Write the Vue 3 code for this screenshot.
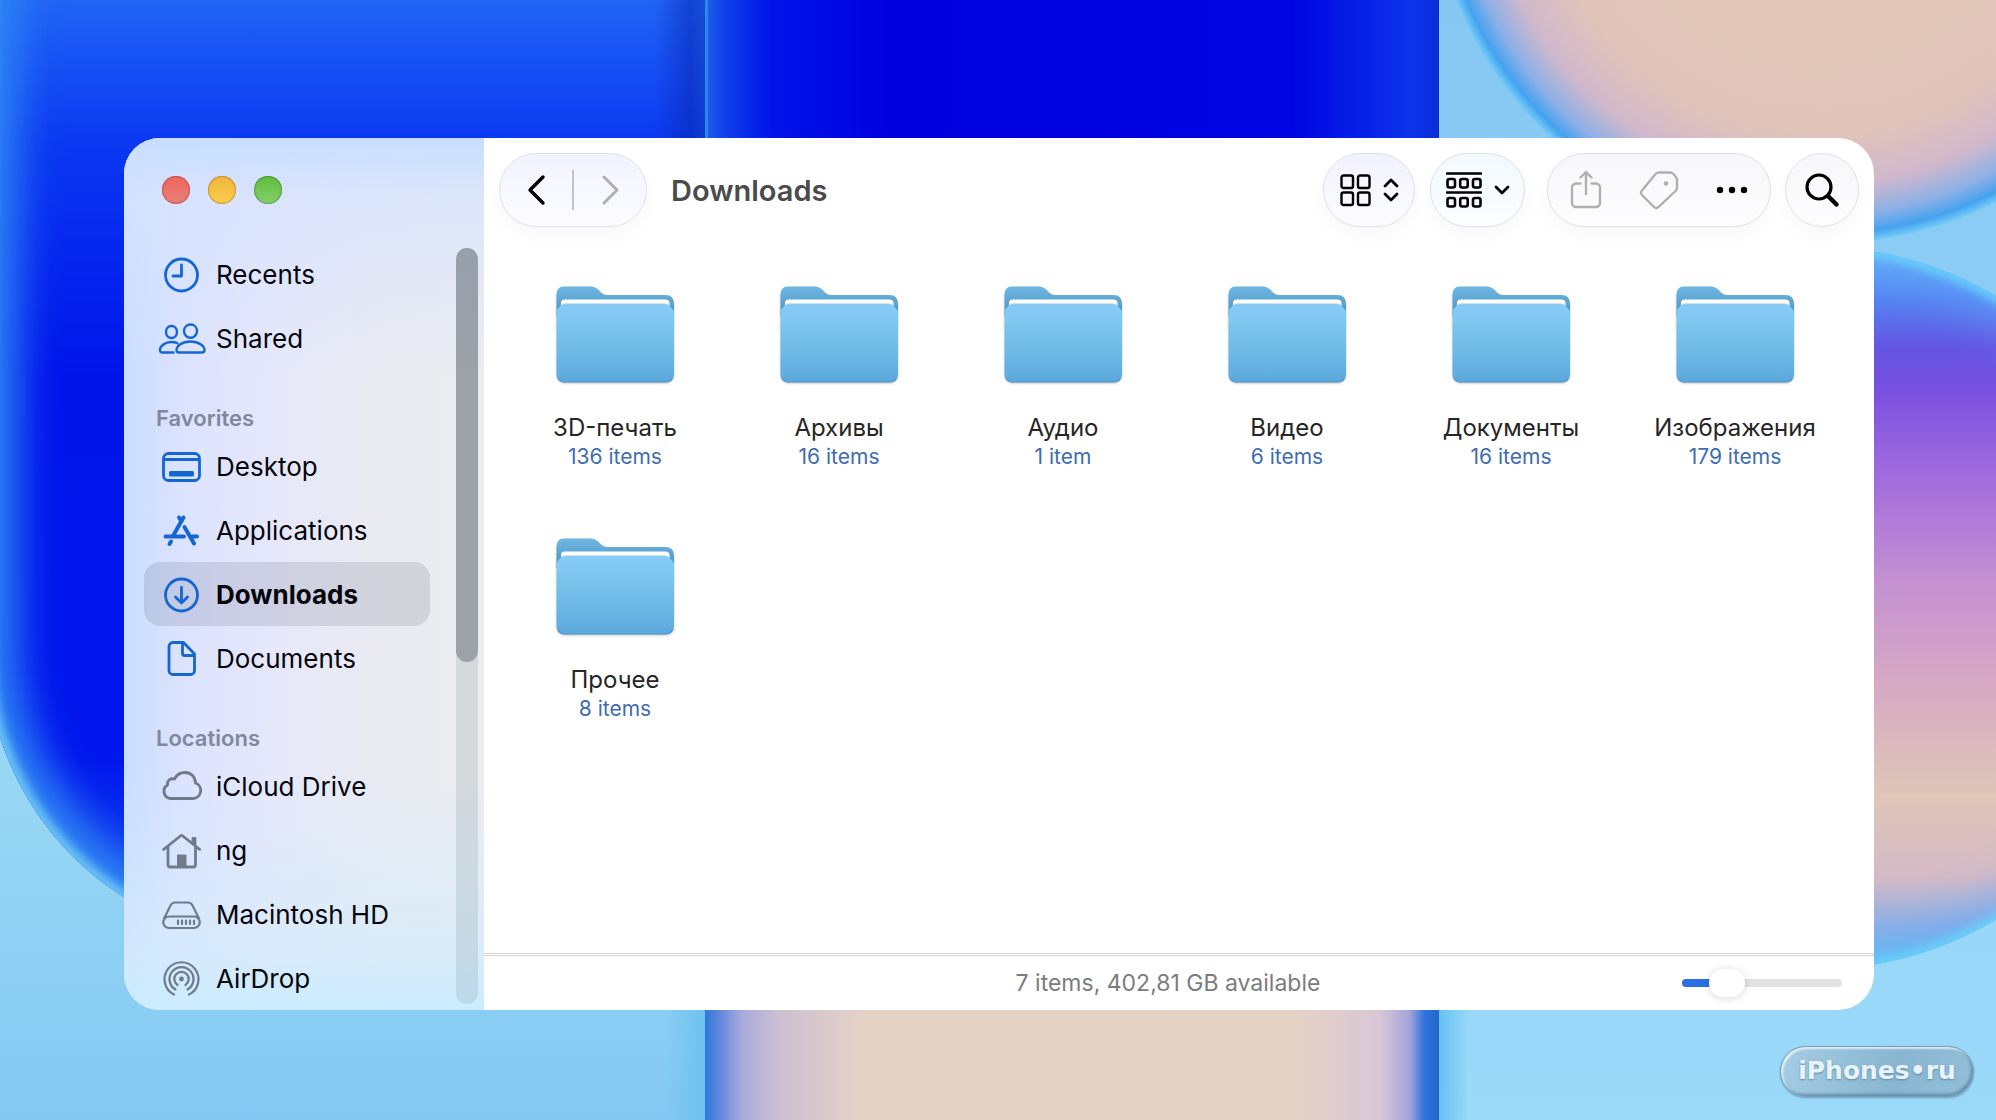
<template>
  <div class="desktop">
    <svg class="wallpaper" viewBox="0 0 1996 1120" preserveAspectRatio="none" aria-hidden="true">
      <defs>
        <linearGradient id="sky" x1="0" y1="0" x2="0" y2="1">
          <stop offset="0" stop-color="#7cc4f2" />
          <stop offset="0.7" stop-color="#98d7f4" />
          <stop offset="1" stop-color="#84c9f3" />
        </linearGradient>
        <linearGradient id="skyRight" x1="0" y1="0" x2="0" y2="1">
          <stop offset="0" stop-color="#86c8f3" />
          <stop offset="1" stop-color="#9bdaf9" />
        </linearGradient>
        <linearGradient id="blob" gradientUnits="userSpaceOnUse" x1="0" y1="0" x2="0" y2="943">
          <stop offset="0" stop-color="#2064f5" />
          <stop offset="0.15" stop-color="#0b38f1" />
          <stop offset="0.4" stop-color="#0014ea" />
          <stop offset="0.8" stop-color="#0016ec" />
          <stop offset="1" stop-color="#1a50ee" />
        </linearGradient>
        <linearGradient id="midTop">
          <stop offset="0" stop-color="#1b62ea" />
          <stop offset="0.03" stop-color="#0f3cea" />
          <stop offset="0.09" stop-color="#0014ea" />
          <stop offset="0.25" stop-color="#0000de" />
          <stop offset="0.8" stop-color="#0004e2" />
          <stop offset="0.96" stop-color="#0c34ea" />
          <stop offset="1" stop-color="#0c2cd8" />
        </linearGradient>
        <linearGradient id="midBottom">
          <stop offset="0" stop-color="#2d78d8" />
          <stop offset="0.02" stop-color="#6286de" />
          <stop offset="0.05" stop-color="#a9aadc" />
          <stop offset="0.1" stop-color="#cdbfd2" />
          <stop offset="0.22" stop-color="#e5d3c7" />
          <stop offset="0.8" stop-color="#e5d3c6" />
          <stop offset="0.92" stop-color="#d8c6d6" />
          <stop offset="0.96" stop-color="#a4a4dc" />
          <stop offset="0.98" stop-color="#2f72dc" />
          <stop offset="1" stop-color="#2268cc" />
        </linearGradient>
        <radialGradient id="peach">
          <stop offset="0" stop-color="#e2c8b6" />
          <stop offset="0.72" stop-color="#e0c4ba" />
          <stop offset="0.85" stop-color="#d0b8cc" />
          <stop offset="0.93" stop-color="#8cb0e6" />
          <stop offset="0.975" stop-color="#45a2f0" />
          <stop offset="1" stop-color="#74cdf8" />
        </radialGradient>
        <linearGradient id="violet" x1="0" y1="0" x2="0" y2="1">
          <stop offset="0" stop-color="#62b4fa" />
          <stop offset="0.07" stop-color="#5484f2" />
          <stop offset="0.14" stop-color="#6456e2" />
          <stop offset="0.2" stop-color="#7a50e0" />
          <stop offset="0.33" stop-color="#a46edc" />
          <stop offset="0.46" stop-color="#c490d2" />
          <stop offset="0.6" stop-color="#d6a8c4" />
          <stop offset="0.76" stop-color="#dec6b8" />
          <stop offset="0.87" stop-color="#d4bac6" />
          <stop offset="0.94" stop-color="#8eb0e4" />
          <stop offset="1" stop-color="#58c4f4" />
        </linearGradient>
        <linearGradient id="seam">
          <stop offset="0" stop-color="#0a28b4" stop-opacity="0" />
          <stop offset="0.7" stop-color="#0a28b4" stop-opacity="0.55" />
          <stop offset="1" stop-color="#1040c0" stop-opacity="0.6" />
        </linearGradient>
        <linearGradient id="seamLow">
          <stop offset="0" stop-color="#6cc2ee" stop-opacity="0" />
          <stop offset="1" stop-color="#6cc2ee" />
        </linearGradient>
        <linearGradient id="seamRight">
          <stop offset="0" stop-color="#64c0f2" />
          <stop offset="1" stop-color="#64c0f2" stop-opacity="0" />
        </linearGradient>
        <filter id="soft" x="-10%" y="-10%" width="120%" height="120%">
          <feGaussianBlur stdDeviation="20" />
        </filter>
        <filter id="rim" x="-10%" y="-10%" width="120%" height="120%">
          <feGaussianBlur stdDeviation="5" />
        </filter>
        <clipPath id="bandLeft"><rect width="705" height="1120" /></clipPath>
        <clipPath id="bandRight"><rect x="1439" width="557" height="1120" /></clipPath>
        <clipPath id="blobClip"><rect x="-14" y="-320" width="1100" height="1263" rx="296" /></clipPath>
        <clipPath id="orbClip"><circle cx="1812" cy="608" r="362" /></clipPath>
      </defs>
      <g clip-path="url(#bandLeft)">
        <rect width="705" height="1120" fill="url(#sky)" />
        <rect x="665" y="900" width="40" height="220" fill="url(#seamLow)" />
        <g clip-path="url(#blobClip)">
          <rect width="705" height="943" fill="url(#blob)" />
          <rect x="-14" y="-320" width="1100" height="1263" rx="296" fill="none" stroke="#2f86f4" stroke-width="64" filter="url(#soft)" />
          <rect x="-14" y="-320" width="1100" height="1263" rx="296" fill="none" stroke="#6cc4f4" stroke-width="14" filter="url(#rim)" />
        </g>
        <rect x="655" width="50" height="140" fill="url(#seam)" />
      </g>
      <rect x="705" width="734" height="560" fill="url(#midTop)" />
      <rect x="705" y="560" width="734" height="560" fill="url(#midBottom)" />
      <rect x="705" width="3" height="140" fill="#2f86e8" />
      <g clip-path="url(#bandRight)">
        <rect x="1439" width="557" height="1120" fill="url(#skyRight)" />
        <rect x="1439" y="900" width="30" height="220" fill="url(#seamRight)" />
        <circle cx="1820" cy="-150" r="394" fill="url(#peach)" />
        <circle cx="1812" cy="608" r="362" fill="url(#violet)" />
        <g clip-path="url(#orbClip)">
          <circle cx="1812" cy="608" r="362" fill="none" stroke="#5fa8f8" stroke-width="40" stroke-opacity="0.6" filter="url(#soft)" />
          <circle cx="1812" cy="608" r="362" fill="none" stroke="#68d0fa" stroke-width="12" filter="url(#rim)" />
        </g>
      </g>
    </svg>

    <main class="window">
      <aside class="sidebar">
        <div class="traffic">
          <button class="light red" type="button" aria-label="Close"></button>
          <button class="light yellow" type="button" aria-label="Minimize"></button>
          <button class="light green" type="button" aria-label="Zoom"></button>
        </div>
        <div class="sidebar_body">
          <nav class="places">
            <template v-for="section in sections" :key="section.id">
              <h2 v-if="section.title" class="section_title">{{ section.title }}</h2>
              <a
                v-for="item in section.items"
                :key="item.name"
                href="#"
                class="place"
                :class="{ active: item.name === current, muted: section.muted }"
                @click.prevent="current = item.name"
              >
                <svg class="place_icon" viewBox="0 0 48 48" aria-hidden="true">
                  <path class="line" :d="item.line" :stroke-width="item.weight || 2.8" />
                  <path v-if="item.solid" class="solid" :d="item.solid" />
                </svg>
                <span>{{ item.name }}</span>
              </a>
            </template>
          </nav>
          <div class="scroll_track"><div class="scroll_thumb"></div></div>
        </div>
      </aside>

      <section class="content">
        <header class="toolbar">
          <div class="pill nav_pill">
            <button type="button" aria-label="Back">
              <svg width="20" height="32" viewBox="0 0 20 32"><path d="M17 3 4 16l13 13" stroke-width="3.4" /></svg>
            </button>
            <span class="divider"></span>
            <button type="button" aria-label="Forward" class="dim">
              <svg width="20" height="32" viewBox="0 0 20 32"><path d="m4 3 13 13L4 29" stroke-width="3" /></svg>
            </button>
          </div>
          <h1 class="title">Downloads</h1>

          <button class="pill view_pill" type="button" aria-label="View">
            <svg width="32" height="34" viewBox="0 0 32 34">
              <g stroke-width="2.4">
                <rect x="2.5" y="2.500" width="11.500" height="12.500" rx="2" />
                <rect x="19" y="2.500" width="11.500" height="12.500" rx="2" />
                <rect x="2.500" y="19.500" width="11.500" height="12.500" rx="2" />
                <rect x="19" y="19.500" width="11.500" height="12.500" rx="2" />
              </g>
            </svg>
            <svg width="16" height="24" viewBox="0 0 16 24"><path d="m2 8 6-6 6 6M2 16l6 6 6-6" stroke-width="2.8" /></svg>
          </button>

          <button class="pill group_pill" type="button" aria-label="Group">
            <svg width="36" height="38" viewBox="0 0 36 38">
              <path d="M1 2.500h34M1 21.500h34" stroke-width="2.600" />
              <g stroke-width="2.600">
                <rect x="1.500" y="8" width="7.500" height="8.500" rx="2" />
                <rect x="14.200" y="8" width="7.500" height="8.500" rx="2" />
                <rect x="27" y="8" width="7.500" height="8.500" rx="2" />
                <rect x="1.500" y="27" width="7.500" height="8.500" rx="2" />
                <rect x="14.200" y="27" width="7.500" height="8.500" rx="2" />
                <rect x="27" y="27" width="7.500" height="8.500" rx="2" />
              </g>
            </svg>
            <svg width="16" height="12" viewBox="0 0 16 12"><path d="m2 3 6 6 6-6" stroke-width="2.8" /></svg>
          </button>

          <div class="pill action_pill">
            <button type="button" aria-label="Share" class="dim">
              <svg width="32" height="40" viewBox="0 0 32 40">
                <path d="M10.500 13.500H6a4 4 0 0 0-4 4V33a4 4 0 0 0 4 4h20a4 4 0 0 0 4-4V17.500a4 4 0 0 0-4-4h-4.500M16 24V2M10.500 7.500 16 2l5.500 5.500" stroke-width="2.400" />
              </svg>
            </button>
            <button type="button" aria-label="Tags" class="dim">
              <svg width="40" height="40" viewBox="0 0 40 40">
                <path d="M20 2.500h11q2 0 3.500 1.500l2 2.500q1.500 1.500 1.500 3.500v7.500q0 2-1.500 3.500L19.500 37q-2.500 2-4.500 0L3 25q-2-2.500 0-4.500L16.500 4Q18 2.500 20 2.500z" stroke-width="2.400" />
                <circle cx="27" cy="13.500" r="2.300" fill="currentColor" stroke="none" />
              </svg>
            </button>
            <button type="button" aria-label="More">
              <svg width="32" height="10" viewBox="0 0 32 10">
                <g fill="currentColor" stroke="none">
                  <circle cx="4" cy="5" r="3.200" /><circle cx="16" cy="5" r="3.200" /><circle cx="28" cy="5" r="3.200" />
                </g>
              </svg>
            </button>
          </div>

          <button class="pill search_pill" type="button" aria-label="Search">
            <svg width="36" height="36" viewBox="0 0 36 36">
              <circle cx="15" cy="15" r="12" stroke-width="3.200" />
              <path d="m24 24 8.500 8.500" stroke-width="4.400" />
            </svg>
          </button>
        </header>

        <div class="files">
          <a v-for="folder in folders" :key="folder.name" href="#" class="folder" @click.prevent>
            <svg class="folder_icon" width="119" height="97" viewBox="0 0 119 97" aria-hidden="true">
              <defs>
                <linearGradient id="back" x1="0" y1="0" x2="0" y2="1">
                  <stop offset="0" stop-color="#6fb8e2" />
                  <stop offset="1" stop-color="#4b92c0" />
                </linearGradient>
                <linearGradient id="front" x1="0" y1="0" x2="0" y2="1">
                  <stop offset="0" stop-color="#87ccf7" />
                  <stop offset="0.5" stop-color="#73bee8" />
                  <stop offset="1" stop-color="#5ba9dc" />
                </linearGradient>
              </defs>
              <path d="M.5 9Q.5.500 8 .500h27q4 0 6.500 2.500l4 4Q48 9 51 9h58q9 0 9 9v12H.5z" fill="url(#back)" />
              <path d="M5 24v-7q0-3.500 3.500-3.500h101q4 0 4 3.500v7z" fill="#fff" />
              <path d="M.5 26q0-2.500 2-4l3-3q1.500-1.500 4-1.500h99q2.500 0 4 1.500l3.500 3.500q2 2 2 4V88q0 8-8 8H8.500q-8 0-8-8z" fill="url(#front)" />
              <path d="M2.500 92.500q2 3.500 6 3.500H110q4 0 6-3.500" fill="none" stroke="#4d93c2" stroke-width="1.200" />
            </svg>
            <span class="folder_name">{{ folder.name }}</span>
            <span class="folder_count">{{ folder.count }} {{ folder.count === 1 ? 'item' : 'items' }}</span>
          </a>
        </div>

        <footer class="status">
          <span class="status_text">{{ folders.length }} items, 402,81 GB available</span>
          <input
            v-model="iconSize"
            class="size_slider"
            type="range"
            min="0"
            max="100"
            aria-label="Icon size"
            :style="{ '--fill': iconSize + '%' }"
          />
        </footer>
      </section>
    </main>

    <a href="#" class="badge" @click.prevent>iPhones•ru</a>
  </div>
</template>

<script setup>
import { ref } from 'vue';

const current = ref('Downloads');
const iconSize = ref(22);

// Иконки бокового меню: line — контур, solid — заливка
const sections = [
  {
    id: 'top',
    items: [
      { name: 'Recents', line: 'M39.500 25a16 16 0 1 1-32 0 16 16 0 0 1 32 0zM23.500 15v11h-8.500' },
      {
        name: 'Shared',
        weight: 2.4,
        line: 'M19 18c0 3.500-2.500 6-5.500 6S8 21.500 8 18s2.500-6 5.500-6 5.500 2.500 5.500 6zM39 17c0 4-3 6.800-6.500 6.800S26 21 26 17s3-6.500 6.500-6.500S39 13 39 17zM15.500 38.500H4.500c-1.600 0-2.500-1-2.500-2.500C2 32 7 28 13.500 28c2.500 0 4.500.500 6 1.300M21 38.500h23c1.600 0 2.500-1 2.500-2.500 0-4-5.500-8.500-14-8.500s-14 4.500-14 8.500c0 1.500.9 2.500 2.500 2.500z'
      }
    ]
  },
  {
    id: 'favorites',
    title: 'Favorites',
    items: [
      {
        name: 'Desktop',
        line: 'M10.500 11.500h26a5 5 0 0 1 5 5v17a5 5 0 0 1-5 5h-26a5 5 0 0 1-5-5v-17a5 5 0 0 1 5-5zM6 17.500h35',
        solid: 'M12.500 29h22a1.500 1.500 0 0 1 1.500 1.500V33a1.500 1.500 0 0 1-1.500 1.500h-22A1.500 1.500 0 0 1 11 33v-2.500a1.500 1.500 0 0 1 1.500-1.500z'
      },
      { name: 'Applications', weight: 4, line: 'M25.500 11.500 15.500 29M21 11.500l2.500 4M26.500 21l9.500 16.500M7.500 30.500h18.500M34 30.500h5M13 35.500l-1.500 2.500' },
      { name: 'Downloads', line: 'M39.500 25a16 16 0 1 1-32 0 16 16 0 0 1 32 0zM23.500 17.500v14.500M17.500 27l6 6 6-6' },
      { name: 'Documents', line: 'M15 8.500h10.500L36.500 20v16.500a4 4 0 0 1-4 4H15a4 4 0 0 1-4-4V12.500a4 4 0 0 1 4-4zM24.500 9v10.500a2 2 0 0 0 2 2H36.500' }
    ]
  },
  {
    id: 'locations',
    title: 'Locations',
    muted: true,
    items: [
      { name: 'iCloud Drive', line: 'M12.500 36.500h22.500a8 8 0 0 0 2.500-15.500C37.500 15 33 10.500 27 10.500c-5 0-8.500 2.500-10.500 6.500-4-1-7.500 1.500-7 6A7.300 7.300 0 0 0 12.500 36.500z' },
      {
        name: 'ng',
        line: 'M5.500 23.500 22.400 10q1.200-.9 2.400 0l17 13.500M10 21v17.500a2.500 2.500 0 0 0 2.500 2.500h22.500a2.500 2.500 0 0 0 2.500-2.500V21M35 17v-4.500h2V19',
        solid: 'M19 29.500a1 1 0 0 1 1-1h7.500a1 1 0 0 1 1 1V41H19z'
      },
      { name: 'Macintosh HD', line: 'M6 28.500 12.500 15.500q1.500-3 4.500-3h13q3 0 4.500 3L41 28.500M11 26.500h25a5.500 5.500 0 0 1 0 11.500H11a5.500 5.500 0 0 1 0-11.500zM20 30.500v3.500M24 30.500v3.500M28 30.500v3.500M32 30.500v3.500M36 30.500v3.500', weight: 2.2 },
      {
        name: 'AirDrop',
        weight: 2.2,
        line: 'M16 40.500a17 17 0 1 1 15 0M17.500 35.500a12 12 0 1 1 12 0M19.500 31a7.200 7.200 0 1 1 8 0',
        solid: 'M25.900 25a2.400 2.400 0 1 1-4.800 0 2.400 2.400 0 0 1 4.800 0z'
      }
    ]
  }
];

const folders = [
  { name: '3D-печать', count: 136 },
  { name: 'Архивы', count: 16 },
  { name: 'Аудио', count: 1 },
  { name: 'Видео', count: 6 },
  { name: 'Документы', count: 16 },
  { name: 'Изображения', count: 179 },
  { name: 'Прочее', count: 8 }
];
</script>

<style>
body {
  margin: 0;
}
</style>

<style scoped>
.desktop {
  position: relative;
  box-sizing: border-box;
  height: 100vh;
  min-height: 600px;
  padding: 138px 122px 110px 124px;
  overflow: hidden;
  font-family: Inter, "Liberation Sans", sans-serif;
}

.wallpaper {
  position: absolute;
  inset: 0;
  width: 100%;
  height: 100%;
}

.window {
  position: relative;
  display: flex;
  height: 100%;
  border-radius: 36px;
  overflow: hidden;
  background: #fff;
}

button {
  padding: 0;
  border: none;
  background: none;
  color: #000;
  font: inherit;
}

/* Боковая панель */
.sidebar {
  display: flex;
  flex-direction: column;
  flex: 0 0 360px;
  background:
    linear-gradient(180deg, #c8deff 0, rgba(214, 227, 255, 0.7) 60px, rgba(228, 232, 253, 0) 240px),
    linear-gradient(0deg, #cbecff 0, rgba(212, 236, 252, 0.7) 60px, rgba(228, 236, 248, 0) 240px),
    linear-gradient(90deg, #c9ddff 0, #dce3ff 60px, #e6e8fa 150px, #eaebf1 260px, #ebecef 100%);
}

.traffic {
  display: flex;
  flex: 0 0 66px;
  gap: 18px;
  padding: 38px 0 0 38px;
}

.light {
  width: 28px;
  height: 28px;
  border-radius: 50%;
}

.red {
  background: linear-gradient(#f0655c, #e8807a);
  box-shadow: inset 0 0 2px #7c1c18;
}

.yellow {
  background: linear-gradient(#f3b63c, #f8cc50);
  box-shadow: inset 0 0 2px #7a4a06;
}

.green {
  background: linear-gradient(#5fbf3c, #85cf6c);
  box-shadow: inset 0 0 2px #14500c;
}

.sidebar_body {
  display: flex;
  flex: 1;
  min-height: 0;
}

.places {
  flex: 1;
  padding: 0 26px 0 20px;
  overflow: hidden;
}

.section_title {
  margin: 0;
  padding: 32px 0 0 12px;
  font-size: 22px;
  font-weight: 600;
  line-height: 32px;
  color: #80889b;
}

.place {
  display: flex;
  align-items: center;
  gap: 10px;
  height: 64px;
  padding-left: 14px;
  border-radius: 16px;
  font-size: 26px;
  color: #05060c;
  text-decoration: none;
  white-space: nowrap;
}

.place.active {
  background: rgba(0, 0, 20, 0.1);
  font-weight: 700;
}

.place_icon {
  flex: none;
  width: 48px;
  height: 48px;
  color: #1466d2;
}

.muted .place_icon {
  color: #717a89;
}

.line {
  fill: none;
  stroke: currentColor;
  stroke-linecap: round;
  stroke-linejoin: round;
}

.solid {
  fill: currentColor;
}

.scroll_track {
  flex: 0 0 22px;
  margin: 6px;
  margin-left: 0;
  border-radius: 11px;
  background: rgba(40, 60, 70, 0.11);
}

.scroll_thumb {
  height: 54.7%;
  border-radius: 11px;
  background: rgba(60, 68, 76, 0.37);
}

/* Панель инструментов */
.content {
  display: flex;
  flex: 1;
  flex-direction: column;
  min-width: 0;
}

.toolbar {
  display: flex;
  align-items: center;
  flex: none;
  padding: 15px 15px 0;
}

.toolbar svg {
  display: block;
  fill: none;
  stroke: currentColor;
  stroke-linecap: round;
  stroke-linejoin: round;
}

.pill {
  display: flex;
  align-items: center;
  justify-content: center;
  box-sizing: border-box;
  height: 74px;
  border: 1px solid #dfe0e8;
  border-radius: 37px;
  background: linear-gradient(#f7f7fb, #fdfdfe);
  box-shadow: 0 8px 16px rgba(0, 0, 0, 0.03);
}

.nav_pill {
  gap: 26px;
  width: 148px;
  background: linear-gradient(#f1f3ff, #fcfcff);
}

.divider {
  width: 2px;
  height: 40px;
  background: #c2c3c9;
}

.pill .dim {
  color: #b0b0b3;
}

.title {
  flex: 1;
  margin: 0 0 0 24px;
  font-size: 29px;
  font-weight: 600;
  color: #4b4b4d;
}

.view_pill {
  gap: 12px;
  width: 92px;
  margin-right: 15px;
  background: linear-gradient(#f1f2ff, #fcfcff);
}

.group_pill {
  gap: 12px;
  width: 95px;
  margin-right: 22px;
  background: linear-gradient(#f2f9fd, #fcfdff);
}

.action_pill {
  justify-content: space-between;
  width: 224px;
  margin-right: 14px;
  padding: 0 22px;
}

.search_pill {
  width: 74px;
}

/* Файлы */
.files {
  display: grid;
  flex: 1;
  grid-template-columns: repeat(auto-fill, minmax(200px, 1fr));
  grid-auto-rows: 252px;
  min-height: 0;
  padding: 59px 27px 0 19px;
  overflow: hidden;
}

.folder {
  display: flex;
  flex-direction: column;
  align-items: center;
  text-decoration: none;
}

.folder_icon {
  margin-bottom: 30px;
  filter: drop-shadow(0 1px 1px rgba(40, 70, 100, 0.3));
}

.folder_name {
  font-size: 24px;
  line-height: 30px;
  color: #262626;
}

.folder_count {
  font-size: 21px;
  line-height: 28px;
  color: #3e6db2;
}

/* Строка состояния */
.status {
  display: grid;
  flex: none;
  grid-template-columns: 1fr auto 1fr;
  align-items: center;
  height: 54px;
  padding: 0 32px 0 10px;
  border-top: 3px double #d2d4d5;
}

.status_text {
  grid-column: 2;
  font-size: 23px;
  line-height: 28px;
  color: #7c7c7e;
}

.size_slider {
  justify-self: end;
  width: 160px;
  height: 28px;
  margin: 0;
  appearance: none;
  background: none;
}

.size_slider::-webkit-slider-runnable-track {
  height: 8px;
  border-radius: 4px;
  background: linear-gradient(90deg, #2a70e2 var(--fill), #e3e3e4 var(--fill));
}

.size_slider::-webkit-slider-thumb {
  width: 36px;
  height: 28px;
  margin-top: -10px;
  appearance: none;
  border-radius: 14px;
  background: #fff;
  box-shadow: 0 1px 8px rgba(0, 0, 0, 0.16);
}

/* Плашка сайта поверх обоев */
.badge {
  position: absolute;
  right: 22px;
  bottom: 23px;
  box-sizing: border-box;
  width: 194px;
  height: 51px;
  border: 1px solid #7d9fb3;
  border-radius: 26px;
  background: linear-gradient(100deg, #a4cde4, #88b5d0 60%, #92bfd8);
  box-shadow: inset 2px 2px 2px rgba(255, 255, 255, 0.7), inset -2px -2px 3px rgba(70, 110, 140, 0.6), 0 1px 2px rgba(50, 90, 120, 0.5);
  font-family: "DejaVu Sans", sans-serif;
  font-size: 25px;
  font-weight: 700;
  line-height: 48px;
  text-align: center;
  text-decoration: none;
  color: #e8f3fc;
  text-shadow: 0 1px 2px #5b87a3;
}
</style>
